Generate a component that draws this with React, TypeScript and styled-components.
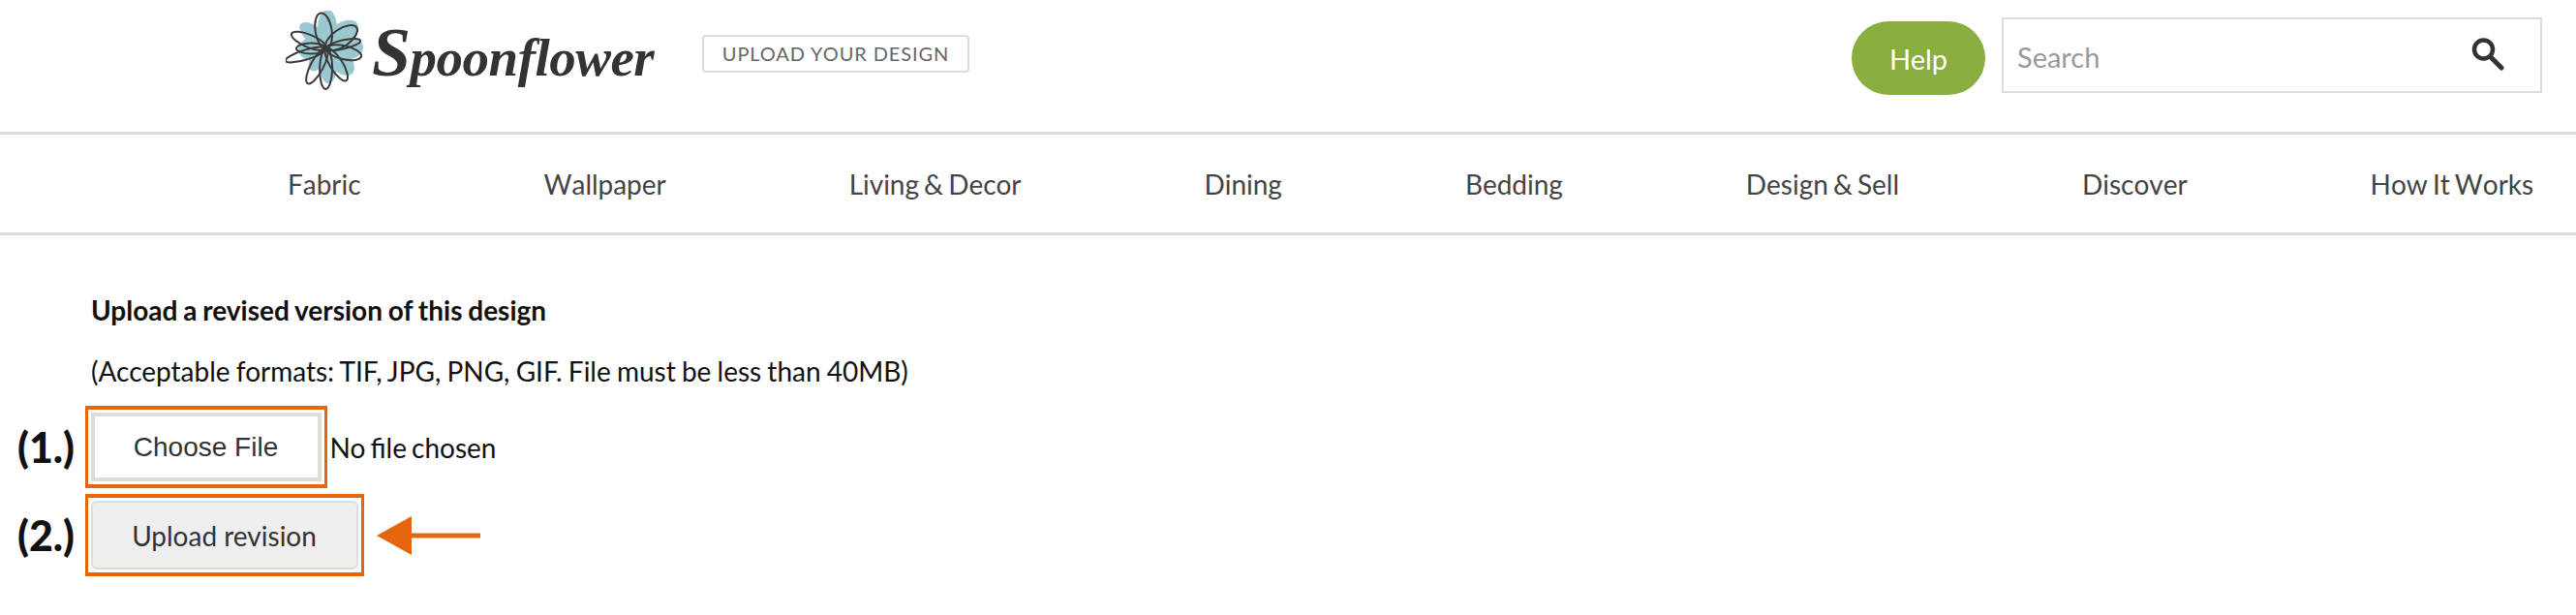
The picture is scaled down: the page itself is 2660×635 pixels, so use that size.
import React from "react";
import styled, { createGlobalStyle } from "styled-components";

const GlobalStyle = createGlobalStyle`
  html, body {
    margin: 0;
    padding: 0;
    background: #fff;
    font-family: "Lato", "Liberation Sans", sans-serif;
    word-spacing: -2px;
  }
`;

const Header = styled.header`
  display: flex;
  align-items: flex-start;
  height: 136px;
  padding: 0 35px 0 295px;
  border-bottom: 3px solid #ddd;
`;

const LogoLink = styled.a`
  display: flex;
  align-items: flex-start;
  width: 430px;
  flex: none;
  color: #333;
`;

const Flower = styled.svg`
  width: 80px;
  height: 82px;
  margin-top: 11px;
  flex: none;
`;

const Wordmark = styled.span`
  display: block;
  margin: 17px 0 0 9px;
  font-family: "Liberation Serif", serif;
  font-style: italic;
  font-weight: 700;
  font-size: 55px;
  line-height: 74px;
  letter-spacing: -0.5px;
  color: #333;
  &::first-letter {
    font-size: 72px;
  }
`;

const UploadBadge = styled.span`
  box-sizing: border-box;
  margin-top: 36px;
  width: 276px;
  height: 39px;
  border: 2px solid #ddd;
  border-radius: 4px;
  font-size: 20px;
  line-height: 35px;
  letter-spacing: 0.9px;
  word-spacing: 0;
  text-align: center;
  color: #666;
`;

const Tools = styled.div`
  display: flex;
  align-items: flex-start;
  gap: 17px;
  margin-left: auto;
`;

const HelpButton = styled.button`
  width: 138px;
  height: 76px;
  margin-top: 22px;
  border: 0;
  border-radius: 38px;
  background: #8aad3f;
  color: #fff;
  font: 400 29px "Lato", sans-serif;
`;

const SearchBox = styled.div`
  box-sizing: border-box;
  display: flex;
  align-items: center;
  width: 558px;
  height: 78px;
  margin-top: 18px;
  padding: 0 37px 0 14px;
  border: 2px solid #ddd;
`;

const SearchInput = styled.input`
  flex: 1;
  min-width: 0;
  border: 0;
  outline: 0;
  padding: 2px 0 0;
  font: 400 29px "Lato", sans-serif;
  color: #333;
  &::placeholder {
    color: #999;
    opacity: 1;
  }
`;

const SearchIcon = styled.svg`
  width: 34px;
  height: 34px;
  flex: none;
  margin-top: -3px;
`;

const NavBar = styled.nav`
  display: flex;
  align-items: center;
  gap: 189px;
  height: 101px;
  padding-left: 297px;
  border-bottom: 3px solid #ddd;
  white-space: nowrap;
`;

const NavLink = styled.a`
  font-size: 28px;
  line-height: 34px;
  font-kerning: none;
  letter-spacing: -0.03px;
  color: #444;
`;

const Main = styled.main`
  padding: 59px 0 0 0;
`;

const Heading = styled.h1`
  margin: 0 0 27px 94px;
  font-size: 28px;
  line-height: 36px;
  font-weight: 700;
  word-spacing: -1px;
  color: #111;
`;

const Formats = styled.p`
  margin: 0 0 18px 94px;
  font-size: 28px;
  line-height: 36px;
  word-spacing: -1px;
  color: #111;
`;

const Step = styled.div`
  display: flex;
  align-items: center;
  margin-bottom: 6px;
  padding-left: 18px;
`;

const StepLabel = styled.span`
  width: 69.5px;
  flex: none;
  font-size: 43px;
  font-weight: 900;
  line-height: 48px;
  word-spacing: 0;
  color: #111;
`;

const Highlight = styled.div`
  box-sizing: border-box;
  height: 85px;
  padding: 3px;
  border-style: solid;
  border-width: 4px 3px;
  border-color: #e5660f;
  flex: none;
`;

const ChooseButton = styled.button`
  box-sizing: border-box;
  display: block;
  width: 238px;
  height: 71px;
  border: 4px solid #ddd;
  background: #fff;
  color: #333;
  font: 400 28px "Liberation Sans", Arial, sans-serif;
  word-spacing: 0;
`;

const UploadButton = styled.button`
  box-sizing: border-box;
  display: block;
  width: 276px;
  height: 71px;
  border: 2px solid #ddd;
  border-radius: 6px;
  background: #eee;
  color: #333;
  font: 400 28px "Lato", sans-serif;
  word-spacing: 0;
`;

const FileStatus = styled.span`
  margin-left: 3px;
  font-size: 28px;
  color: #111;
`;

const Arrow = styled.svg`
  width: 108px;
  height: 42px;
  margin-left: 13px;
  flex: none;
`;

// angle is clockwise from straight up, all sizes in svg units
const petals = [
  { angle: -9, length: 37, width: 17 },
  { angle: 55, length: 38, width: 18 },
  { angle: 77, length: 36, width: 9 },
  { angle: 103, length: 37, width: 14 },
  { angle: 148, length: 39, width: 13 },
  { angle: 181, length: 42, width: 13 },
  { angle: 208, length: 41, width: 13 },
  { angle: 253, length: 44, width: 10 },
  { angle: 270, length: 31, width: 11 },
  { angle: 293, length: 39, width: 13 }
];

// the colour wash behind the outlines, wider and a little off register
const washes = [
  { angle: 0, length: 38, width: 20 },
  { angle: 52, length: 39, width: 24 },
  { angle: 92, length: 37, width: 26 },
  { angle: 138, length: 38, width: 22 },
  { angle: 178, length: 38, width: 18 },
  { angle: 215, length: 30, width: 16 },
  { angle: 262, length: 30, width: 24 },
  { angle: 310, length: 36, width: 18 }
];

const navItems = ["Fabric", "Wallpaper", "Living & Decor", "Dining", "Bedding", "Design & Sell", "Discover", "How It Works"];

const Logo = () => (
  <Flower viewBox="0 0 80 82" aria-hidden="true">
    <g transform="translate(43 37)" fill="#9ac8d0">
      <circle r="16" />
      {washes.map(p => (
        <ellipse key={p.angle} cx={0} cy={-p.length / 2} rx={p.width / 2} ry={p.length / 2} transform={`rotate(${p.angle})`} />
      ))}
    </g>
    <g transform="translate(42 39)" fill="none" stroke="#3a3a3a" strokeWidth="2">
      {petals.map(p => (
        <ellipse key={p.angle} cx={0} cy={-p.length / 2} rx={p.width / 2} ry={p.length / 2} transform={`rotate(${p.angle})`} />
      ))}
    </g>
  </Flower>
);

const App = () => (
  <>
    <GlobalStyle />
    <Header>
      <LogoLink>
        <Logo />
        <Wordmark>Spoonflower</Wordmark>
      </LogoLink>
      <UploadBadge>UPLOAD YOUR DESIGN</UploadBadge>
      <Tools>
        <HelpButton>Help</HelpButton>
        <SearchBox>
          <SearchInput placeholder="Search" />
          <SearchIcon viewBox="0 0 34 34" aria-hidden="true">
            <circle cx="12.5" cy="12" r="9.5" fill="none" stroke="#333" strokeWidth="4.5" />
            <path d="M20 20 L31 31" stroke="#333" strokeWidth="5" strokeLinecap="round" />
          </SearchIcon>
        </SearchBox>
      </Tools>
    </Header>
    <NavBar>
      {navItems.map(item => <NavLink key={item}>{item}</NavLink>)}
    </NavBar>
    <Main>
      <Heading>Upload a revised version of this design</Heading>
      <Formats>(Acceptable formats: TIF, JPG, PNG, GIF. File must be less than 40MB)</Formats>
      <Step>
        <StepLabel>(1.)</StepLabel>
        <Highlight>
          <ChooseButton>Choose File</ChooseButton>
        </Highlight>
        <FileStatus>No file chosen</FileStatus>
      </Step>
      <Step>
        <StepLabel>(2.)</StepLabel>
        <Highlight>
          <UploadButton>Upload revision</UploadButton>
        </Highlight>
        <Arrow viewBox="0 0 108 42" aria-hidden="true">
          <path d="M107 21 H34" stroke="#e5660f" strokeWidth="5" fill="none" />
          <path d="M0 21 L36 1 V41 Z" fill="#e5660f" />
        </Arrow>
      </Step>
    </Main>
  </>
);

export default App;
